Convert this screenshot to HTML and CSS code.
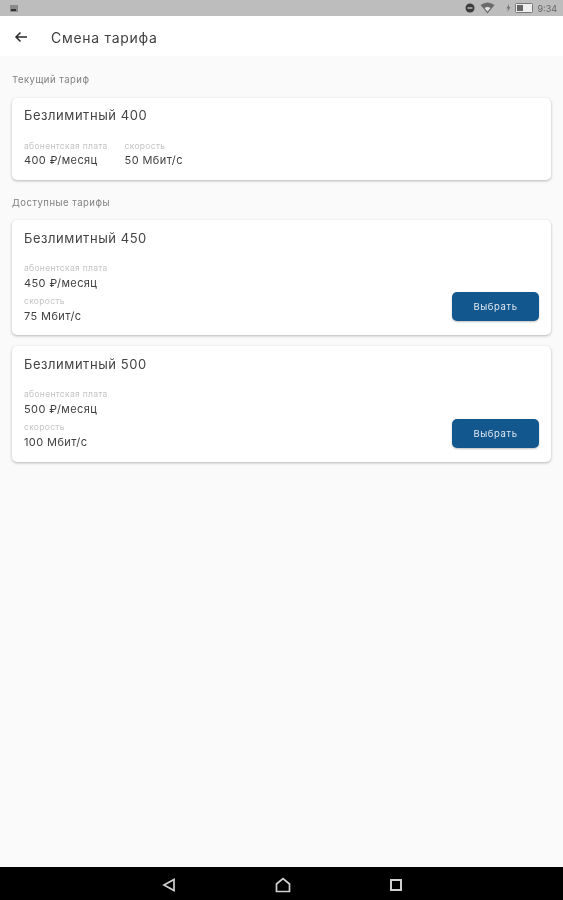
FILE: index.html
```html
<!DOCTYPE html>
<html lang="ru">

<head>
    <meta name="viewport" content="width=device-width, initial-scale=1.0">
    <title>Смена тарифа</title>
    <link rel="stylesheet" href="styles.css">
</head>

<body>
    <div class="status">
        <svg class="status-pic" width="10" height="9" viewBox="0 0 10 9"><rect x="1" y="1" width="8" height="7" fill="#8a8a8a" /><rect x="2" y="5" width="5" height="2" fill="#333" /></svg>
        <div class="status-right">
            <svg width="10" height="10" viewBox="0 0 10 10"><circle cx="5" cy="5" r="4.5" fill="#3c3c3c" /><rect x="2.500" y="4" width="5" height="2" fill="#9a9a9a" /></svg>
            <svg class="status-wifi" width="15" height="12" viewBox="0 0 15 12"><path d="M0.500 3 Q7.500 -2 14.500 3 L7.500 11.500 Z" fill="#6a6a6a" /><path d="M4.500 6 Q7.500 4 10.500 6 L7.500 9.500 Z" fill="#e4e4e4" /></svg>
            <svg class="status-bolt" width="5" height="8" viewBox="0 0 5 8"><path d="M3 0 L0.500 4.500 H2 L1.500 8 L4.500 3 H3 Z" fill="#777" /></svg>
            <svg class="status-battery" width="18" height="10" viewBox="0 0 18 10"><rect x="0.500" y="0.500" width="17" height="9" rx="1" fill="#efefef" stroke="#777" /><rect x="2" y="2" width="6" height="6" fill="#666" /></svg>
            <span class="status-time">9:34</span>
        </div>
    </div>

    <header class="appbar">
        <svg class="back" width="14" height="12" viewBox="0 0 14 12"><path d="M13 6 H2 M6.500 1.500 L2 6 L6.500 10.500" fill="none" stroke="#2b2b2b" stroke-width="1.500" /></svg>
        <h1 class="appbar-title">Смена тарифа</h1>
    </header>

    <main class="content">
        <h2 class="section-label">Текущий тариф</h2>
        <section class="card card-current">
            <h3 class="tariff-name">Безлимитный 400</h3>
            <div class="params-row">
                <div class="param">
                    <div class="param-label">абонентская плата</div>
                    <div class="param-value">400 ₽/месяц</div>
                </div>
                <div class="param">
                    <div class="param-label">скорость</div>
                    <div class="param-value">50 Мбит/с</div>
                </div>
            </div>
        </section>

        <h2 class="section-label section-available">Доступные тарифы</h2>
        <section class="card">
            <h3 class="tariff-name">Безлимитный 450</h3>
            <div class="card-bottom">
                <div class="params-col">
                    <div class="param">
                        <div class="param-label">абонентская плата</div>
                        <div class="param-value">450 ₽/месяц</div>
                    </div>
                    <div class="param">
                        <div class="param-label">скорость</div>
                        <div class="param-value">75 Мбит/с</div>
                    </div>
                </div>
                <button class="select-btn">Выбрать</button>
            </div>
        </section>
        <section class="card">
            <h3 class="tariff-name">Безлимитный 500</h3>
            <div class="card-bottom">
                <div class="params-col">
                    <div class="param">
                        <div class="param-label">абонентская плата</div>
                        <div class="param-value">500 ₽/месяц</div>
                    </div>
                    <div class="param">
                        <div class="param-label">скорость</div>
                        <div class="param-value">100 Мбит/с</div>
                    </div>
                </div>
                <button class="select-btn">Выбрать</button>
            </div>
        </section>
    </main>

    <nav class="navbar">
        <svg width="14" height="14" viewBox="0 0 14 14"><path d="M12 1.500 V12.500 L2 7 Z" fill="none" stroke="#d0d0d0" stroke-width="1.700" /></svg>
        <svg width="16" height="16" viewBox="0 0 16 16"><path d="M1.500 14.500 V7 L8 1.500 L14.500 7 V14.500 Z" fill="none" stroke="#d0d0d0" stroke-width="1.700" /></svg>
        <svg width="12" height="12" viewBox="0 0 12 12"><rect x="1" y="1" width="10" height="10" fill="none" stroke="#d0d0d0" stroke-width="2" /></svg>
    </nav>
</body>

</html>
```

FILE: styles.css
```css
* {
    box-sizing: border-box;
}

html,
body {
    height: 100%;
}

body {
    margin: 0;
    display: flex;
    flex-direction: column;
    height: 900px;
    overflow: hidden;
    background: #fafafa;
    color: #3a3a3a;
    font-family: "Inter", "Liberation Sans", sans-serif;
}

/* the reference is an upscaled, soft capture */
.status-right,
.appbar,
.section-label,
.tariff-name,
.param,
.select-btn {
    filter: blur(0.4px);
}

.status {
    height: 16px;
    flex-shrink: 0;
    display: flex;
    align-items: center;
    justify-content: space-between;
    padding: 0 6px 0 9px;
    background: #bdbdbd;
}

.status-pic {
    display: block;
}

.status-right {
    display: flex;
    align-items: center;
}

.status-wifi {
    margin: 0 11px 0 5px;
}

.status-bolt {
    margin-right: 4px;
}

.status-battery {
    margin-right: 4px;
}

.status-time {
    font-size: 9px;
    color: #666;
}

.appbar {
    height: 40px;
    flex-shrink: 0;
    display: flex;
    align-items: center;
    padding: 2px 0 0 14px;
    background: #fff;
}

.appbar-title {
    margin: 0 0 0 23px;
    font-size: 14px;
    font-weight: 400;
    letter-spacing: 0.7px;
    color: #3f3f3f;
}

.content {
    flex: 1;
    padding: 18px 12px 0;
}

.section-label {
    margin: 0 0 12px;
    font-size: 9.500px;
    line-height: 12px;
    font-weight: 400;
    letter-spacing: 0.5px;
    color: #808080;
}

.section-available {
    margin: 17px 0 11px;
}

.card {
    height: 115.400px;
    margin-bottom: 11px;
    padding: 10px 12px 14px 12px;
    display: flex;
    flex-direction: column;
    border-radius: 5px;
    background: #fff;
    box-shadow: 0 1px 3px rgba(0, 0, 0, 0.28);
}

.card-current {
    height: 82px;
    margin-bottom: 0;
    padding-top: 9px;
}

.tariff-name {
    margin: 0;
    font-size: 13px;
    line-height: 16px;
    font-weight: 400;
    letter-spacing: 0.55px;
    color: #444;
}

.params-row {
    display: flex;
    gap: 17px;
    margin-top: 17.500px;
}

.params-row .param-value {
    line-height: 16px;
}

.card-bottom {
    flex: 1;
    display: flex;
    align-items: flex-end;
    justify-content: space-between;
}

.params-col {
    display: flex;
    flex-direction: column;
    gap: 4px;
    margin-bottom: -3.500px;
}

.param-label {
    font-size: 8.500px;
    line-height: 11px;
    letter-spacing: 0.3px;
    color: #c4c4c4;
}

.param-value {
    font-size: 11px;
    line-height: 18px;
    letter-spacing: 0.4px;
    color: #3f3f3f;
}

.select-btn {
    width: 87px;
    height: 29px;
    border: none;
    border-radius: 5px;
    background: #13578f;
    box-shadow: 0 1px 2px rgba(0, 0, 0, 0.25);
    color: #dfe8f0;
    font-family: inherit;
    font-size: 9.500px;
    letter-spacing: 0.6px;
}

.navbar {
    height: 33px;
    flex-shrink: 0;
    display: flex;
    align-items: center;
    justify-content: center;
    gap: 99px;
    padding-top: 3px;
    background: #000;
}
```
